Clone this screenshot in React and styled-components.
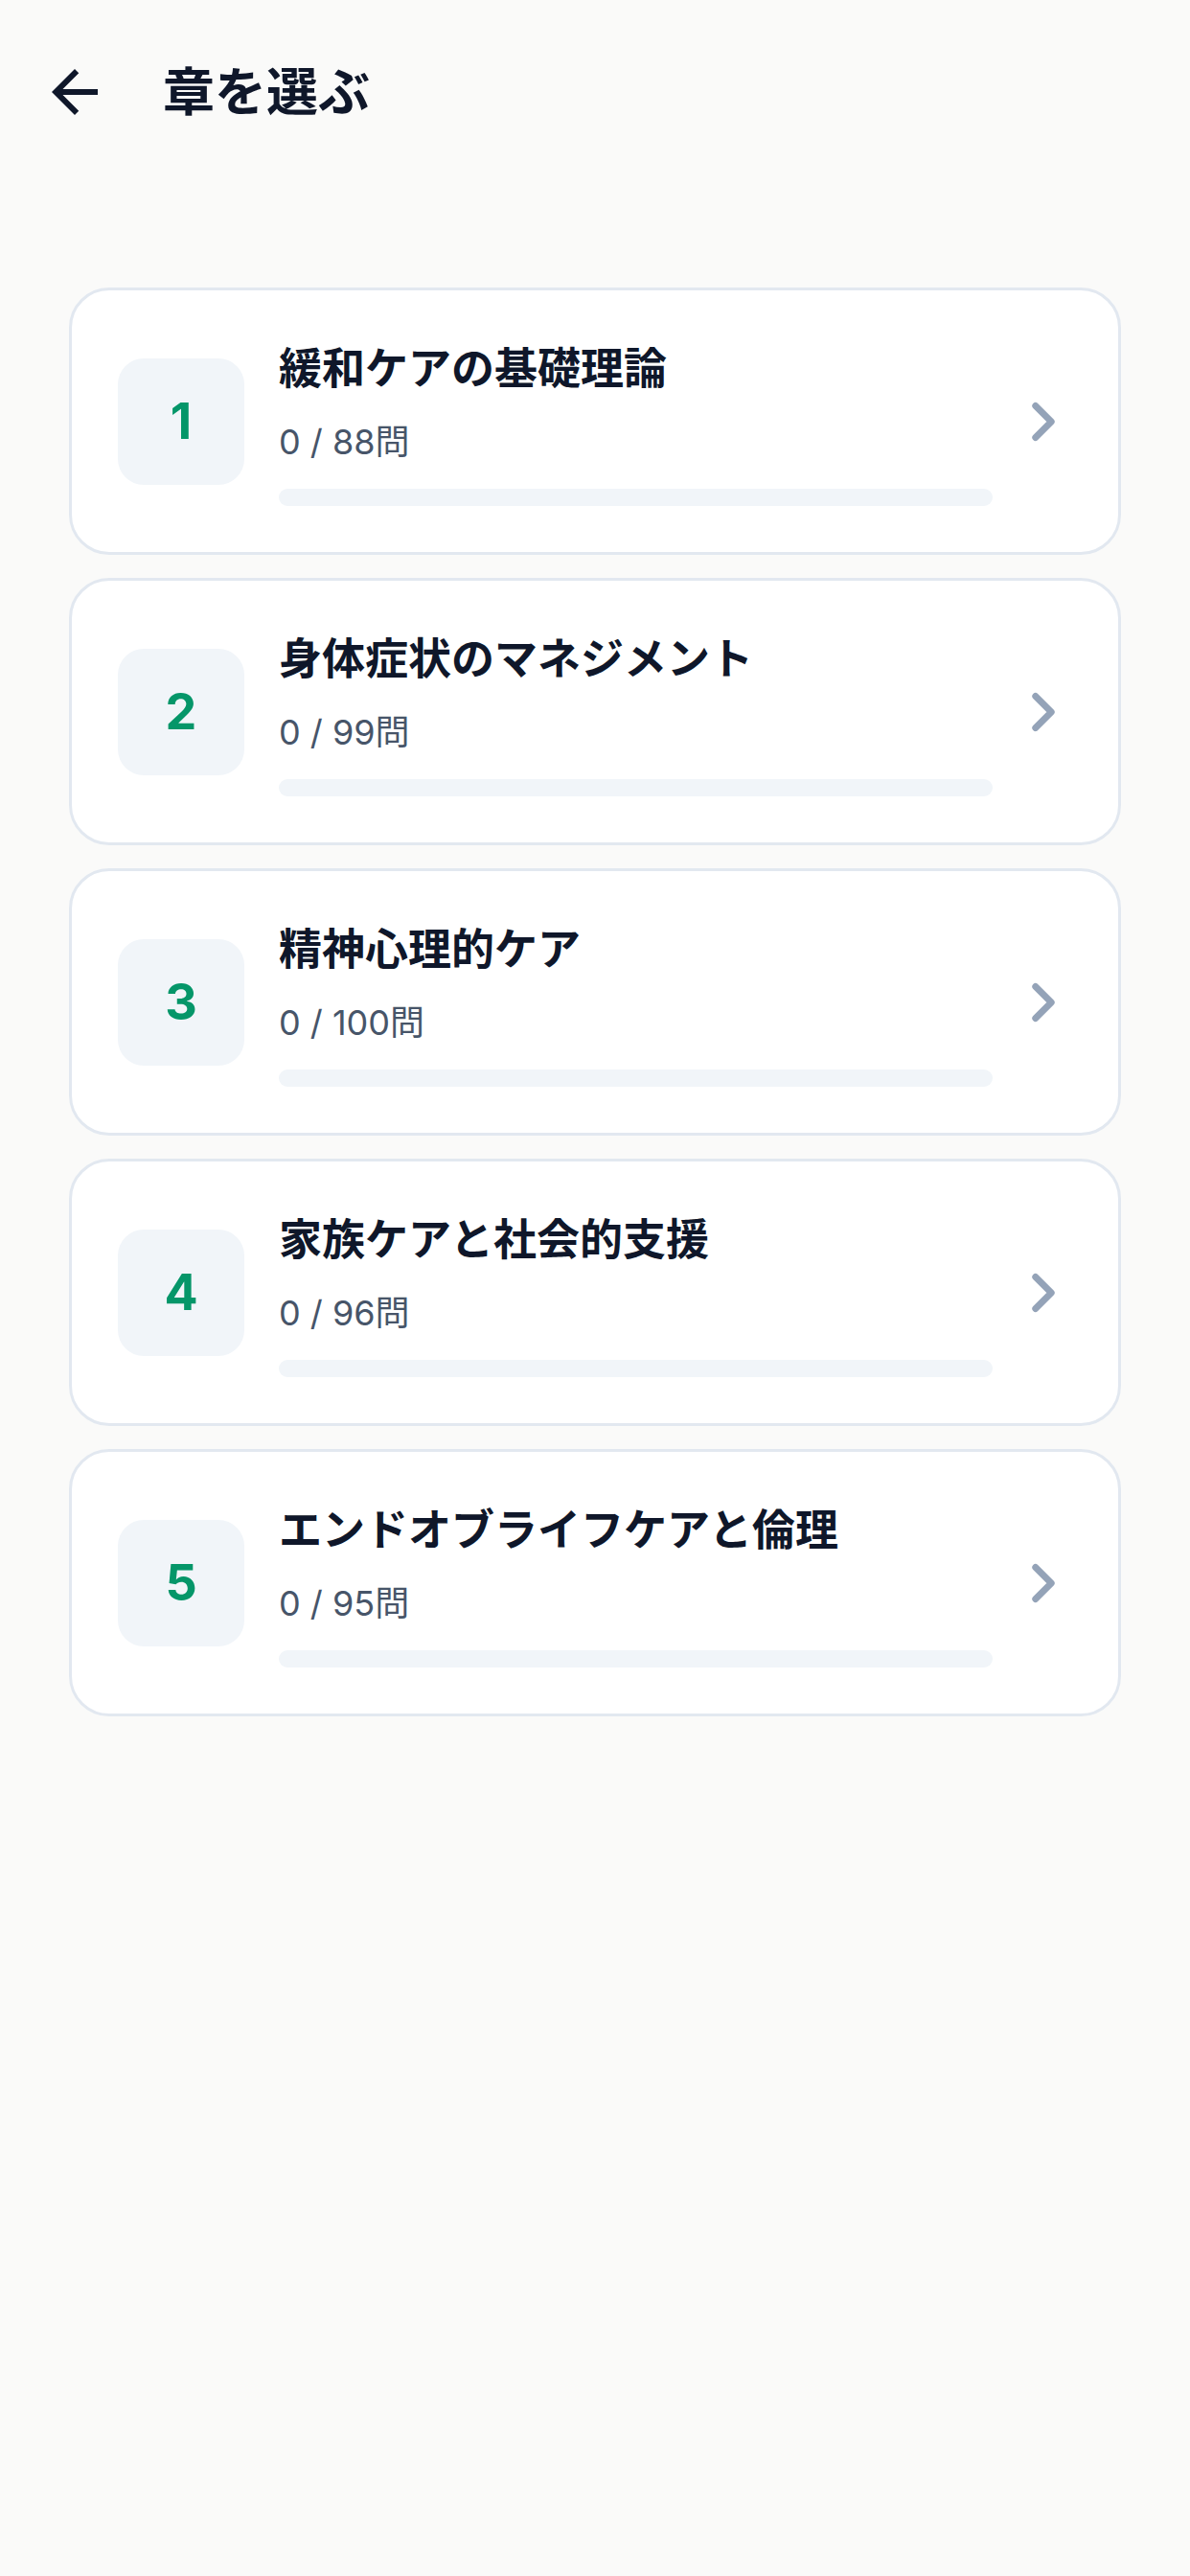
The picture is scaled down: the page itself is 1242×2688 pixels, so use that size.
import React from "react";
import styled, { createGlobalStyle } from "styled-components";

const GlobalStyle = createGlobalStyle`
  html, body {
    margin: 0;
    padding: 0;
    background: #fafaf9;
  }
  body {
    font-family: "Inter", "Noto Sans CJK JP", sans-serif;
  }
  * { box-sizing: border-box; }
`;

const Page = styled.div`
  width: 1242px;
  min-height: 2688px;
  background: #fafaf9;
  display: flex;
  flex-direction: column;
`;

const Header = styled.header`
  display: flex;
  align-items: center;
  height: 72px;
  margin-top: 60px;
  padding-left: 42px;
  gap: 56px;
`;

const BackButton = styled.button`
  width: 72px;
  height: 72px;
  padding: 0;
  border: none;
  background: transparent;
  display: flex;
  align-items: center;
  justify-content: center;
  color: #0f172a;
  cursor: pointer;
`;

const Title = styled.h1`
  margin: 0;
  font-family: "Noto Sans CJK JP", sans-serif;
  font-size: 54px;
  font-weight: 700;
  line-height: 66px;
  padding-bottom: 6px;
  color: #0f172a;
`;

const List = styled.div`
  display: flex;
  flex-direction: column;
  gap: 24px;
  margin-top: 168px;
  padding: 0 72px;
`;

const Card = styled.div`
  display: flex;
  align-items: center;
  height: 279px;
  padding: 0 45px 0 48px;
  background: #ffffff;
  border: 3px solid #e2e8f0;
  border-radius: 42px;
`;

const NumberBox = styled.div`
  flex: none;
  width: 132px;
  height: 132px;
  border-radius: 27px;
  background: #f1f5f9;
  display: flex;
  align-items: center;
  justify-content: center;
  font-family: "Inter", sans-serif;
  font-size: 52px;
  font-weight: 700;
  color: #059669;
`;

const Body = styled.div`
  flex: 1;
  display: flex;
  flex-direction: column;
  margin-left: 36px;
  padding-top: 2px;
`;

const ChapterTitle = styled.div`
  font-family: "Noto Sans CJK JP", sans-serif;
  font-size: 45px;
  font-weight: 700;
  line-height: 58px;
  color: #0f172a;
`;

const Count = styled.div`
  margin-top: 26px;
  font-size: 36px;
  font-weight: 400;
  line-height: 48px;
  color: #475569;
`;

const Track = styled.div`
  margin-top: 25px;
  height: 18px;
  border-radius: 9px;
  background: #f1f5f9;
  overflow: hidden;
`;

const Fill = styled.div`
  height: 100%;
  background: #059669;
  border-radius: 9px;
`;

const Chevron = styled.div`
  flex: none;
  width: 66px;
  height: 66px;
  margin-left: 20px;
  color: #94a3b8;
  display: flex;
`;

const chapters = [
  { n: 1, title: "緩和ケアの基礎理論", done: 0, total: 88 },
  { n: 2, title: "身体症状のマネジメント", done: 0, total: 99 },
  { n: 3, title: "精神心理的ケア", done: 0, total: 100 },
  { n: 4, title: "家族ケアと社会的支援", done: 0, total: 96 },
  { n: 5, title: "エンドオブライフケアと倫理", done: 0, total: 95 },
];

export default function App() {
  return (
    <Page>
      <GlobalStyle />
      <Header>
        <BackButton aria-label="戻る">
          <svg width="72" height="72" viewBox="0 0 24 24" fill="currentColor">
            <path d="M20 11H7.83l5.59-5.59L12 4l-8 8 8 8 1.41-1.41L7.83 13H20v-2z" />
          </svg>
        </BackButton>
        <Title>章を選ぶ</Title>
      </Header>
      <List>
        {chapters.map((c) => (
          <Card key={c.n}>
            <NumberBox>{c.n}</NumberBox>
            <Body>
              <ChapterTitle>{c.title}</ChapterTitle>
              <Count>
                {c.done} / {c.total}問
              </Count>
              <Track>
                <Fill style={{ width: `${(c.done / c.total) * 100}%` }} />
              </Track>
            </Body>
            <Chevron>
              <svg
                width="66"
                height="66"
                viewBox="0 0 24 24"
                fill="none"
                stroke="currentColor"
                strokeWidth="2.5"
                strokeLinecap="round"
                strokeLinejoin="round"
              >
                <path d="m9 18 6-6-6-6" />
              </svg>
            </Chevron>
          </Card>
        ))}
      </List>
    </Page>
  );
}
